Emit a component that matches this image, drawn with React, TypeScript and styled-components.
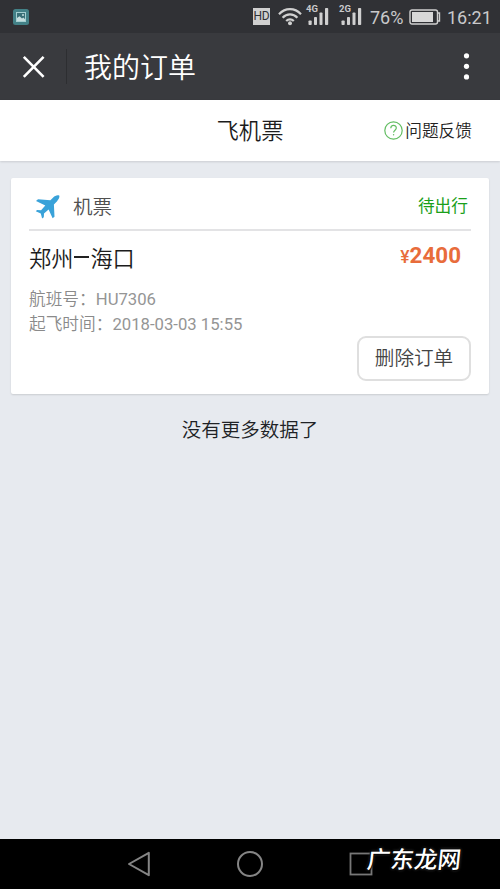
import React from 'react';
import styled, { createGlobalStyle } from 'styled-components';

const GlobalStyle = createGlobalStyle`
  * { box-sizing: border-box; }
  body {
    margin: 0;
    background: #e7eaef;
    font-family: Roboto, "Noto Sans CJK SC", sans-serif;
  }
  svg { display: block; flex: none; }
`;

const Screen = styled.div`
  width: 500px;
  height: 889px;
  display: flex;
  flex-direction: column;
  background: #e7eaef;
  overflow: hidden;
`;

const StatusBar = styled.header`
  height: 33px;
  flex: none;
  display: flex;
  align-items: center;
  padding: 0 9px 0 13px;
  background: #303135;
  color: #c9c9cb;
`;

const StatusIcons = styled.div`
  margin-left: auto;
  display: flex;
  align-items: center;
`;

const HdBadge = styled.span`
  width: 17px;
  height: 17px;
  margin-right: 8px;
  background: #d0d0d0;
  color: #303135;
  font-size: 12px;
  line-height: 17px;
  text-align: center;
  letter-spacing: -0.3px;
`;

const StatusText = styled.span`
  font-size: 18px;
  line-height: 31px;
  padding-top: 2px;
  white-space: nowrap;
`;

const Percent = styled(StatusText)`
  width: 39px;
  margin-left: 7px;
`;

const Clock = styled(StatusText)`
  width: 44px;
  margin-left: 6px;
`;

const SignalBox = styled.div<{ $gap: number }>`
  position: relative;
  width: 24px;
  height: 33px;
  margin-left: ${(p) => p.$gap}px;
`;

const SignalLabel = styled.span`
  position: absolute;
  left: 0;
  top: 4px;
  font-size: 9.5px;
  line-height: 10px;
  font-weight: 700;
`;

const TitleBar = styled.div`
  height: 67px;
  flex: none;
  display: flex;
  align-items: center;
  padding: 0 29px 0 22px;
  background: #393a3e;
  color: #fff;
`;

const TitleDivider = styled.i`
  width: 1px;
  height: 35px;
  margin: 0 17px 0 21px;
  background: #2d2e31;
`;

const Title = styled.h1`
  margin: 0 auto 0 0;
  font-size: 28px;
  line-height: 40px;
  padding-top: 5px;
  font-weight: 350;
`;

const TabBar = styled.nav`
  height: 61px;
  flex: none;
  display: grid;
  grid-template-columns: 1fr auto 1fr;
  align-items: center;
  padding: 0 28px;
  background: #fff;
  box-shadow: 0 1px 2px rgba(0, 0, 0, 0.12);
`;

const TabTitle = styled.h2`
  grid-column: 2;
  margin: 0;
  font-size: 22.3px;
  line-height: 32px;
  font-weight: 350;
  color: #1c1c1c;
`;

const Feedback = styled.div`
  justify-self: end;
  display: flex;
  align-items: center;
  gap: 2px;
  font-size: 16.7px;
  font-weight: 350;
  line-height: 24px;
  color: #222;
`;

const FeedbackText = styled.span`
  padding-top: 2px;
`;

const Card = styled.article`
  height: 216px;
  flex: none;
  margin: 17px 11px 0;
  padding: 0 18px;
  border-radius: 2px;
  background: #fff;
  box-shadow: 0 1px 2px rgba(0, 0, 0, 0.13);
`;

const CardHead = styled.div`
  height: 53px;
  display: flex;
  align-items: center;
  padding: 7px 3px 0 6px;
  border-bottom: 2px solid #e3e3e5;
`;

const Kind = styled.span`
  margin: 0 auto 0 13px;
  padding-top: 1px;
  font-size: 19.5px;
  font-weight: 350;
  line-height: 28px;
  color: #505050;
`;

const State = styled.span`
  font-size: 16.7px;
  line-height: 24px;
  color: #1aa01a;
`;

const RouteRow = styled.div`
  height: 55px;
  display: flex;
  justify-content: space-between;
  padding-right: 10px;
`;

const Route = styled.div`
  display: flex;
  align-items: center;
  height: 52px;
  font-size: 22.2px;
  font-weight: 350;
  color: #1c1c1c;
`;

const Dash = styled.i`
  width: 15px;
  height: 2px;
  margin: 0 1px;
  background: #222;
`;

const Price = styled.div`
  font-size: 22.4px;
  line-height: 49px;
  font-weight: 700;
  color: #e86c3b;
`;

const Currency = styled.span`
  font-size: 17.5px;
  font-weight: 500;
`;

const Detail = styled.div`
  height: 25px;
  font-size: 16.7px;
  line-height: 27px;
  color: #959595;
`;

const DetailLabel = styled.span`
  font-weight: 350;
  color: #8a8a8a;
`;

const DeleteButton = styled.button`
  display: block;
  width: 114px;
  height: 45px;
  padding: 0;
  margin-left: auto;
  border: 2px solid #dfdfdf;
  border-radius: 9px;
  background: #fff;
  color: #444;
  font-family: inherit;
  font-size: 19.6px;
  font-weight: 350;
  line-height: 28px;
  white-space: nowrap;
`;

const EndNote = styled.p`
  margin: 23px 0 0;
  text-align: center;
  font-size: 19.5px;
  font-weight: 350;
  line-height: 28px;
  color: #202225;
`;

const NavBar = styled.footer`
  position: relative;
  height: 50px;
  flex: none;
  margin-top: auto;
  display: flex;
  align-items: center;
  padding-left: 127px;
  gap: 85px;
  background: #000;
`;

const Watermark = styled.span`
  position: absolute;
  left: 367px;
  top: 5px;
  font-size: 23.5px;
  line-height: 32px;
  font-weight: 500;
  color: #fff;
  transform: skewX(-6deg);
  text-shadow: 0 0 1px #000, 1px 1px 1px #000, -1px -1px 1px #000, 0 0 3px #777;
`;

const PhotoIcon = () => (
  <svg width="16" height="16" viewBox="0 0 16 16">
    <rect width="16" height="16" rx="2.5" fill="#438187" />
    <rect x="3.5" y="3.5" width="9" height="9" fill="#397077" stroke="#a5cfd1" />
    <path d="M4 12V9l2.5-1.8L9 9.5l1.4-1 1.6 1.8V12Z" fill="#c5dede" />
    <circle cx="10" cy="6" r="1" fill="#c5dede" />
  </svg>
);

const WifiIcon = () => (
  <svg width="24" height="19" viewBox="0 0 24 19" fill="none" stroke="#d0d0d0" strokeWidth="2.2">
    <path d="M1 7.2C7.2.5 16.8.5 23 7.2M4.6 10.7c4.2-4.5 10.6-4.5 14.8 0M8.2 14c2.2-2.3 5.4-2.3 7.6 0" />
    <circle cx="12" cy="16.3" r="2" fill="#d0d0d0" stroke="none" />
  </svg>
);

const Signal = ({ label, gap }: { label: string; gap: number }) => (
  <SignalBox $gap={gap}>
    <svg width="24" height="33" viewBox="0 0 24 33" fill="#d0d0d0">
      <rect x="2.5" y="20.5" width="3.2" height="4.5" rx=".8" />
      <rect x="8" y="17" width="3" height="8" rx=".8" />
      <rect x="13.5" y="12.5" width="3" height="12.5" rx=".8" />
      <rect x="19" y="8" width="3.2" height="17" rx=".8" />
    </svg>
    <SignalLabel>{label}</SignalLabel>
  </SignalBox>
);

const BatteryIcon = () => (
  <svg width="32" height="16" viewBox="0 0 32 16">
    <rect x="1" y="1" width="27.5" height="14" rx="2" fill="none" stroke="#cfcfcf" strokeWidth="1.4" />
    <rect x="3" y="3" width="21" height="10" fill="#d8d8d8" />
    <path d="M29 4h1.5v8H29" fill="none" stroke="#cfcfcf" strokeWidth="1.4" />
  </svg>
);

const CloseIcon = () => (
  <svg width="23" height="23" viewBox="0 0 23 23">
    <path d="m1.8 1.8 19.8 20M21.6 1.8l-19.8 20" stroke="#fff" strokeWidth="2.6" />
  </svg>
);

const MoreIcon = () => (
  <svg width="9" height="29" viewBox="0 0 9 29" fill="#fff">
    <circle cx="4.5" cy="3.8" r="2.6" />
    <circle cx="4.5" cy="14.3" r="2.6" />
    <circle cx="4.5" cy="24.9" r="2.6" />
  </svg>
);

const HelpIcon = () => (
  <svg width="19" height="19" viewBox="0 0 19 19" fill="none" stroke="#62bd62" strokeWidth="1.2">
    <circle cx="9.5" cy="9.5" r="8.7" />
    <path d="M6.8 7.3c0-3.8 5.5-3.7 5.5-.3 0 2.1-2.7 2.3-2.7 4.6" />
    <circle cx="9.6" cy="13.8" r=".7" fill="#62bd62" stroke="none" />
  </svg>
);

const PlaneIcon = () => (
  <svg width="25" height="24" viewBox="0 0 25 24">
    <path
      d="M24.2.6c-2-.9-4.4.3-6 1.9l-2.8 2.7L3 4.2 1 6l9.3 4.5-4.2 4.8-4.1-.4-1.2 1.4 5 2.2 1.3 4.9 1.7-1.1.2-3.9 4.6-3.8 4 8.7 1.9-1.6-.6-12.1 3.2-3.3C23.2 4.6 25 2.5 24.2.6Z"
      fill="#39a2d9"
    />
  </svg>
);

const BackIcon = () => (
  <svg width="24" height="26" viewBox="0 0 24 26">
    <path d="M21.8 1.8v22.4L2 13Z" fill="none" stroke="#858585" strokeWidth="2" strokeLinejoin="round" />
  </svg>
);

const HomeIcon = () => (
  <svg width="28" height="28" viewBox="0 0 28 28">
    <circle cx="14" cy="14" r="12" fill="none" stroke="#858585" strokeWidth="2" />
  </svg>
);

const RecentIcon = () => (
  <svg width="24" height="24" viewBox="0 0 24 24">
    <rect x="1.5" y="1.5" width="21" height="21" fill="none" stroke="#777" strokeWidth="1.8" />
  </svg>
);

export default function App() {
  return (
    <>
      <GlobalStyle />
      <Screen>
        <StatusBar>
          <PhotoIcon />
          <StatusIcons>
            <HdBadge>HD</HdBadge>
            <WifiIcon />
            <Signal label="4G" gap={4} />
            <Signal label="2G" gap={9} />
            <Percent>76%</Percent>
            <BatteryIcon />
            <Clock>16:21</Clock>
          </StatusIcons>
        </StatusBar>
        <TitleBar>
          <CloseIcon />
          <TitleDivider />
          <Title>我的订单</Title>
          <MoreIcon />
        </TitleBar>
        <TabBar>
          <TabTitle>飞机票</TabTitle>
          <Feedback>
            <HelpIcon />
            <FeedbackText>问题反馈</FeedbackText>
          </Feedback>
        </TabBar>
        <Card>
          <CardHead>
            <PlaneIcon />
            <Kind>机票</Kind>
            <State>待出行</State>
          </CardHead>
          <RouteRow>
            <Route>
              郑州
              <Dash />
              海口
            </Route>
            <Price>
              <Currency>¥</Currency>2400
            </Price>
          </RouteRow>
          <Detail>
            <DetailLabel>航班号：</DetailLabel>HU7306
          </Detail>
          <Detail>
            <DetailLabel>起飞时间：</DetailLabel>2018-03-03 15:55
          </Detail>
          <DeleteButton>删除订单</DeleteButton>
        </Card>
        <EndNote>没有更多数据了</EndNote>
        <NavBar>
          <BackIcon />
          <HomeIcon />
          <RecentIcon />
          <Watermark>广东龙网</Watermark>
        </NavBar>
      </Screen>
    </>
  );
}
